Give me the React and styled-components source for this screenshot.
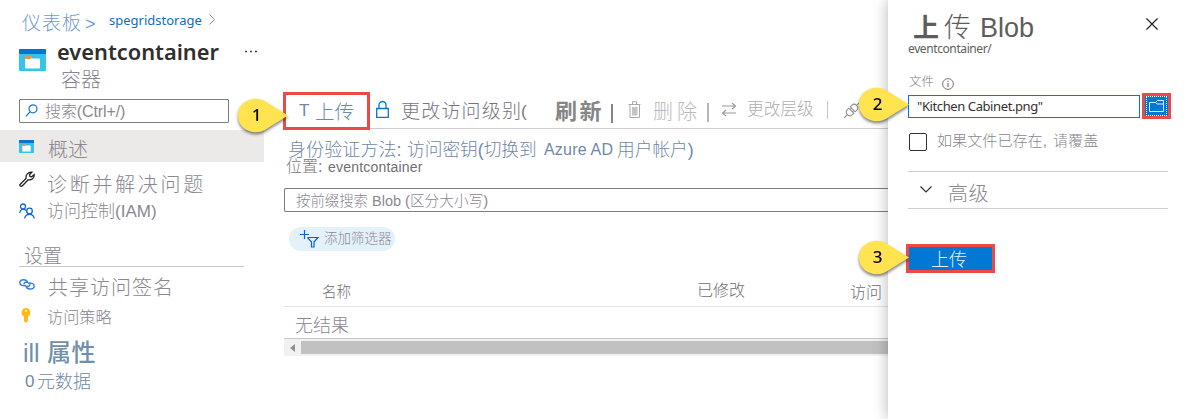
import React from "react";
import styled, { createGlobalStyle } from "styled-components";

const Global = createGlobalStyle`
  * { box-sizing: border-box; }
  body { margin: 0; background: #fff; overflow: hidden; }
`;

const fonts = {
  ui: '"Noto Sans", "Noto Sans CJK SC", sans-serif',
  plain: '"Liberation Sans", "Noto Sans CJK SC", sans-serif',
};

const Page = styled.div`
  position: relative;
  display: grid;
  grid-template-columns: 264px 624px 300px;
  width: 1188px;
  height: 419px;
  overflow: hidden;
  background: #fff;
`;

const Text = styled.span`
  flex: none;
  display: block;
  width: ${(p) => (p.$w ? `${p.$w}px` : "auto")};
  margin-top: ${(p) => (p.$font === "ui" ? 0 : 2)}px;
  margin-left: ${(p) => p.$ml || 0}px;
  margin-bottom: ${(p) => p.$lift || 0}px;
  font-family: ${(p) => fonts[p.$font || "plain"]};
  font-size: ${(p) => p.$size}px;
  font-weight: ${(p) => p.$weight || (p.$font === "ui" ? 400 : 300)};
  letter-spacing: ${(p) => p.$ls || 0}px;
  line-height: 24px;
  color: ${(p) => p.$color || "#8b8790"};
  white-space: nowrap;
`;

const Row = styled.div`
  display: flex;
  flex: none;
  align-items: center;
  height: ${(p) => p.$h}px;
  padding-left: ${(p) => p.$pl || 0}px;
`;

const Icon = styled.svg`
  flex: none;
  display: block;
  overflow: visible;
  fill: none;
  margin-left: ${(p) => p.$ml || 0}px;
  margin-bottom: ${(p) => p.$lift || 0}px;
`;

/* Sidebar */
const Sidebar = styled.nav`
  display: flex;
  flex-direction: column;
  padding-top: 10px;
`;
const SideSearch = styled.div`
  display: flex;
  align-items: center;
  flex: none;
  width: 210px;
  height: 24px;
  margin: 5px 0 7px 19px;
  border: 1px solid #807e7c;
  border-radius: 1px;
`;
const ActiveRow = styled(Row)`
  background: #ebeae9;
`;
const SideRule = styled.div`
  flex: none;
  width: 225px;
  height: 1px;
  margin-left: 19px;
  background: #c8c6c4;
`;

/* Main column */
const Main = styled.main`
  display: flex;
  flex-direction: column;
  padding: 92px 0 0 20px;
  overflow: hidden;
`;
const Toolbar = styled.div`
  display: flex;
  align-items: center;
  flex: none;
  height: 37px;
  border-bottom: 1px solid #cfcdcc;
`;
const UploadFrame = styled.div`
  display: flex;
  align-items: center;
  flex: none;
  width: 87px;
  height: 38px;
  margin: 1px 0 0 -1px;
  border: 3px solid #eb4a46;
`;
const Divider = styled.div`
  flex: none;
  width: ${(p) => p.$w}px;
  height: ${(p) => p.$h}px;
  margin-left: ${(p) => p.$ml}px;
  margin-top: ${(p) => p.$mt || 0}px;
  background: ${(p) => p.$color};
`;
const PrefixSearch = styled.div`
  display: flex;
  align-items: center;
  flex: none;
  height: 24px;
  margin-top: 13px;
  border: 1px solid #807e7c;
  border-right: 0;
  border-radius: 2px 0 0 2px;
`;
const FilterPill = styled.div`
  display: flex;
  align-items: center;
  flex: none;
  width: 106px;
  height: 24px;
  margin: 15px 0 21px 5px;
  border-radius: 12px;
  background: #e3f1fb;
`;
const TableHead = styled(Row)`
  border-bottom: 1px solid #e5e4e3;
`;
const Scrollbar = styled.div`
  display: flex;
  align-items: center;
  flex: none;
  height: 18px;
  border-top: 1px solid #c8c8c8;
  background: #f1f1f1;
`;
const Thumb = styled.div`
  flex: 1;
  height: 13px;
  margin-left: 5px;
  background: #c1c1c1;
`;

/* Upload panel */
const Panel = styled.aside`
  display: flex;
  flex-direction: column;
  padding: 8px 17px 0 20px;
  background: #fff;
  box-shadow: 0 0 14px rgba(0, 0, 0, 0.3);
`;
const FileInput = styled.div`
  display: flex;
  align-items: center;
  flex: none;
  width: 232px;
  height: 23px;
  border: 1px solid #0078d4;
`;
const BrowseButton = styled.div`
  display: flex;
  align-items: center;
  justify-content: center;
  flex: none;
  width: 29px;
  height: 26px;
  margin-left: 2px;
  border: 3px solid #eb4a46;
  background: #0078d4;
`;
const DottedFocus = styled.div`
  display: flex;
  align-items: center;
  justify-content: center;
  width: 21px;
  height: 20px;
  border: 1px dotted #fff;
`;
const Checkbox = styled.div`
  flex: none;
  width: 18px;
  height: 18px;
  margin-left: 1px;
  border: 1px solid #323130;
  border-radius: 2px;
`;
const Advanced = styled.div`
  display: flex;
  align-items: center;
  flex: none;
  width: 260px;
  height: 38px;
  margin-top: 6px;
  border: solid #cfcdcc;
  border-width: 1px 0;
`;
const SubmitButton = styled.div`
  display: flex;
  align-items: center;
  flex: none;
  width: 89px;
  height: 29px;
  margin: 35px 0 0 -2px;
  border: 3px solid #eb4a46;
  background: #0078d4;
`;

const Pin = styled.div`
  position: absolute;
  left: ${(p) => p.$x}px;
  top: ${(p) => p.$y}px;
  width: 52px;
  height: 36px;
  filter: drop-shadow(0 2px 1.5px rgba(0, 0, 0, 0.5));
`;
const PinNumber = styled.span`
  position: absolute;
  left: 0;
  top: 0;
  width: 39px;
  text-align: center;
  font: 500 17px/33px "Noto Sans", sans-serif;
  color: #000;
`;

function Marker({ n, x, y }) {
  return (
    <Pin $x={x} $y={y}>
      <Icon width="52" height="36" viewBox="0 0 52 36">
        <path d="M51 17.5 29 3.8C19-3 1 2 1 17.5S19 38 29 31.2Z" fill="#ffe34f" />
      </Icon>
      <PinNumber>{n}</PinNumber>
    </Pin>
  );
}

function ContainerIcon({ w, h, lift }) {
  return (
    <Icon width={w} height={h} viewBox="0 0 27 22" preserveAspectRatio="none" $lift={lift}>
      <rect width="27" height="22" rx="1" fill="#35c5e8" />
      <path d="M0 1Q0 0 1 0H26Q27 0 27 1V5H0Z" fill="#0a72d0" />
      <path d="M7 8h5l1 1.500h7q1 0 1 1v8q0 1-1 1H7q-1 0-1-1V9Z" fill="#fff" />
      <path d="M6 7h6.500v2.500L11 10H6Z" fill="#f5913e" />
    </Icon>
  );
}

const slate = "#7088a8";

export default function App() {
  return (
    <Page>
      <Global />
      <Sidebar>
        <Row $h={26} $pl={22}>
          <Text $size={19} $ls={1} $w={63} $color="#6f9bd0">仪表板</Text>
          <Text $size={18} $w={24} $color="#6f9bd0">&gt;</Text>
          <Text $font="ui" $size={13} $w={93} $lift={7} $color="#0f6cc4">spegridstorage</Text>
          <Icon width="6" height="11" $ml={7} $lift={8}>
            <path d="M.5.5 5.5 5.5.5 10.5" stroke="#8a8886" />
          </Icon>
        </Row>
        <Row $h={32} $pl={19}>
          <ContainerIcon w={27} h={22} lift={-15} />
          <Text $font="ui" $size={21.8} $weight={600} $ml={11} $w={188} $color="#302f2e">eventcontainer</Text>
          <Icon width="12" height="3" $lift={1}>
            <path d="M0 1.5h2M5 1.5h2M10 1.5h2" stroke="#444" strokeWidth="1.5" />
          </Icon>
        </Row>
        <Row $h={26} $pl={61}>
          <Text $size={20} $lift={4}>容器</Text>
        </Row>
        <SideSearch>
          <Icon width="13" height="13" $ml={5} $lift={1}>
            <circle cx="8" cy="4.800" r="4" stroke="#1976c8" strokeWidth="1.200" />
            <path d="M5 8 .8 12.300" stroke="#1976c8" strokeWidth="1.200" />
          </Icon>
          <Text $size={16} $ls={-0.1} $ml={7}>搜索(Ctrl+/)</Text>
        </SideSearch>
        <ActiveRow $h={32} $pl={19}>
          <ContainerIcon w={15} h={13} lift={0} />
          <Text $size={20} $ml={14} $lift={-6}>概述</Text>
        </ActiveRow>
        <Row $h={36} $pl={19}>
          <Icon width="16" height="16" viewBox="0 0 16 16" $lift={3}>
            <path d="M1 13.5 7 7.5C6.5 4 9 .8 12.8 1.2L10.5 3.7l.4 1.7 1.8.4 2.5-2.3C15.5 7 12.5 9.3 9.2 8.8L3.2 15C2 15.8.2 14.5 1 13.5Z" stroke="#222" strokeWidth="1.3" />
          </Icon>
          <Text $size={20} $ls={2.7} $ml={12} $lift={-7}>诊断并解决问题</Text>
        </Row>
        <Row $h={26} $pl={19}>
          <Icon width="16" height="16" viewBox="0 0 16 16" $lift={1}>
            <g stroke="#1263d6" strokeWidth="1.3">
              <circle cx="4" cy="3.5" r="2.5" />
              <path d="M.7 10C1 6 5 5 7 7.5" />
              <circle cx="10.5" cy="8" r="2.8" />
              <path d="M5.7 15.5c.5-5.5 9-5.5 9.5 0" />
            </g>
          </Icon>
          <Text $size={17} $ml={12}>访问控制(IAM)</Text>
        </Row>
        <Row $h={42} $pl={24}>
          <Text $size={19} $lift={-21}>设置</Text>
        </Row>
        <SideRule />
        <Row $h={36} $pl={19}>
          <Icon width="16" height="11" viewBox="0 0 16 11" $lift={2}>
            <g stroke="#3b7bd8" strokeWidth="1.4">
              <path d="M8.8 3.8C8-.2.8-.2.8 3.5c0 3 3.5 3.6 6.2 3" />
              <path d="M7 7c.8 4 8.2 4 8.2.3 0-3-3.5-3.6-6.2-3" />
              <path d="M5 5.5c0-2 1.500-3 3.500-2M11 5c0 2-1.500 3-3.500 2" />
            </g>
          </Icon>
          <Text $size={20} $ls={1} $ml={13} $lift={-3}>共享访问签名</Text>
        </Row>
        <Row $h={26} $pl={19}>
          <Icon width="10" height="15" viewBox="0 0 10 15" $ml={2} $lift={1}>
            <path d="M5 0a4.600 4.600 0 0 1 2 8.600V13l-2 2-2-2V8.600A4.600 4.600 0 0 1 5 0Z" fill="#fdb813" />
            <circle cx="5" cy="2.800" r="1.100" fill="#fff3c4" />
          </Icon>
          <Text $size={16.2} $ml={16} $lift={0}>访问策略</Text>
        </Row>
        <Row $h={44} $pl={23}>
          <Text $size={25} $w={24} $lift={-1} $color="#6f90a8">ill</Text>
          <Text $size={24} $weight={500} $ls={0.6} $lift={-1} $color="#6f90a8">属性</Text>
        </Row>
        <Row $h={14} $pl={25}>
          <Text $size={17} $w={12} $lift={-1} $color={slate}>0</Text>
          <Text $size={18} $lift={-1} $color={slate}>元数据</Text>
        </Row>
      </Sidebar>

      <Main>
        <Toolbar>
          <UploadFrame>
            <Text $size={17} $ml={13} $w={16} $lift={2} $color={slate}>T</Text>
            <Text $size={19.5} $color={slate}>上传</Text>
          </UploadFrame>
          <Icon width="13" height="17" $ml={6} $lift={1}>
            <path d="M.7 7.5h11.6v8.8H.7ZM3 7.5V4a3.5 3.5 0 0 1 7 0v3.5" stroke="#0078d4" strokeWidth="1.3" />
          </Icon>
          <Text $size={19} $ls={1.2} $ml={12} $w={120} $lift={-1} $color="#77747c">更改访问级别</Text>
          <Text $size={17} $w={34} $lift={-1} $color="#77747c">(</Text>
          <Text $size={22} $weight={700} $ls={2.5} $w={55} $lift={-2} $color="#858585">刷新</Text>
          <Divider $w={2} $h={19} $ml={1} $mt={7} $color="#858585" />
          <Icon width="14" height="17" $ml={15} $lift={1}>
            <path d="M.5 3.5h12M4.5 3V.7h4V3M2 3.5v13h9.5v-13" stroke="#aaa" />
            <path d="M4 6h5.5v8.5H4Z" fill="#c4c4c4" />
          </Icon>
          <Text $size={20} $ls={4} $ml={11} $w={54} $lift={-1} $color="#bcbabd">删除</Text>
          <Divider $w={2} $h={19} $ml={0} $mt={5} $color="#b5b5b5" />
          <Icon width="16" height="15" viewBox="0 0 16 15" $ml={12} $lift={1}>
            <path d="M1 4h13M11 1l3.5 3L11 7M15 11H2M5 8l-3.500 3L5 14" stroke="#999" strokeWidth="1.1" />
          </Icon>
          <Text $size={16.700} $ml={10} $w={80} $lift={2} $color="#b0aeb0">更改层级</Text>
          <Divider $w={1} $h={18} $ml={0} $color="#c8c6c4" />
          <Icon width="18" height="17" viewBox="0 0 18 17" $ml={15} $lift={-1}>
            <g stroke="#8f8f8f" strokeWidth="1.1" transform="rotate(-45 9 8)">
              <path d="M-2 8h4M8 4.5H6a3.5 3.5 0 0 0 0 7h2ZM10 4.5h2a3.5 3.5 0 0 1 0 7h-2ZM8 6.5h2M8 9.5h2M15.5 8h4" />
            </g>
          </Icon>
        </Toolbar>
        <Row $h={31} $pl={4}>
          <Text $size={18} $ls={0.1} $w={119} $lift={-9} $color={slate}>身份验证方法:</Text>
          <Text $size={17.7} $w={137} $lift={-9} $color={slate}>访问密钥(切换到</Text>
          <Text $size={16} $ls={0.2} $w={73} $lift={-9} $color={slate}>Azure AD</Text>
          <Text $size={17.7} $lift={-9} $color={slate}>用户帐户)</Text>
        </Row>
        <Row $h={15} $pl={2}>
          <Text $size={16} $w={42} $lift={4} $color="#77777b">位置:</Text>
          <Text $size={14} $ls={0.2} $lift={4} $color="#6f6e72">eventcontainer</Text>
        </Row>
        <PrefixSearch>
          <Text $size={14.4} $ml={11} $w={76}>按前缀搜索</Text>
          <Text $size={14.5} $w={33}>Blob</Text>
          <Text $size={14.7}>(区分大小写)</Text>
        </PrefixSearch>
        <FilterPill>
          <Icon width="19" height="18" viewBox="0 0 19 18" $ml={11} $lift={0}>
            <path d="M0 4.5h9M4.5 0v9M7.5 7.5h10.5l-4 4.5v5h-2.500v-5l-4-4.500" stroke="#0a62dc" strokeWidth="1.2" />
          </Icon>
          <Text $size={13.5} $ml={5} $lift={2}>添加筛选器</Text>
        </FilterPill>
        <TableHead $h={35} $pl={38}>
          <Text $size={14.5} $w={375} $lift={-3} $color="#706d74">名称</Text>
          <Text $size={16} $w={153} $lift={-1} $color="#706d74">已修改</Text>
          <Text $size={16} $lift={-5} $color="#706d74">访问</Text>
        </TableHead>
        <Row $h={31} $pl={11}>
          <Text $size={18} $lift={-4}>无结果</Text>
        </Row>
        <Scrollbar>
          <Icon width="6" height="8" $ml={6}>
            <path d="M5 0v8L0 4Z" fill="#909090" />
          </Icon>
          <Thumb />
        </Scrollbar>
      </Main>

      <Panel>
        <Row $h={34} $pl={5}>
          <Text $size={26} $weight={700} $w={31} $lift={-3} $color="#5d5d60">上</Text>
          <Text $size={27} $w={36} $lift={-4} $color="#5d5d60">传</Text>
          <Text $size={27} $w={166} $lift={-3} $color="#5d5d60">Blob</Text>
          <Icon width="12" height="12" $lift={2}>
            <path d="M.5.5l11 11M11.5.5l-11 11" stroke="#222" strokeWidth="1.2" />
          </Icon>
        </Row>
        <Row $h={14}>
          <Text $font="ui" $size={12} $ls={-0.4} $lift={1} $color="#605e5c">eventcontainer/</Text>
        </Row>
        <Row $h={37} $pl={1}>
          <Text $size={12.5} $w={33} $lift={-12} $color="#7d7b80">文件</Text>
          <Icon width="12" height="12" $lift={-18}>
            <circle cx="6" cy="6" r="5.4" stroke="#777" />
            <path d="M6 5v4M6 2.8v1.2" stroke="#777" strokeWidth="1.2" />
          </Icon>
        </Row>
        <Row $h={26}>
          <FileInput>
            <Text $font="ui" $size={13} $ls={-0.4} $ml={8} $color="#323130">"Kitchen Cabinet.png"</Text>
          </FileInput>
          <BrowseButton>
            <DottedFocus>
              <Icon width="15" height="12">
                <path d="M.5 2.500v9h14v-11H8.500L6.500 2.500ZM6.500 2.500 8 4h6.500" stroke="#d8ecff" />
              </Icon>
            </DottedFocus>
          </BrowseButton>
        </Row>
        <Row $h={46}>
          <Checkbox />
          <Text $size={15.1} $ml={10} $w={116} $lift={4}>如果文件已存在,</Text>
          <Text $size={15.1} $lift={4}>请覆盖</Text>
        </Row>
        <Advanced>
          <Icon width="12" height="7" $ml={12} $lift={1}>
            <path d="M.5.5 6 6 11.5.5" stroke="#333" strokeWidth="1.2" />
          </Icon>
          <Text $size={20} $ls={0.5} $ml={16} $lift={-5}>高级</Text>
        </Advanced>
        <SubmitButton>
          <Text $size={18} $ml={22} $color="#e4f1fc">上传</Text>
        </SubmitButton>
      </Panel>

      <Marker n="1" x={237} y={98} />
      <Marker n="2" x={858} y={87} />
      <Marker n="3" x={858} y={240} />
    </Page>
  );
}
